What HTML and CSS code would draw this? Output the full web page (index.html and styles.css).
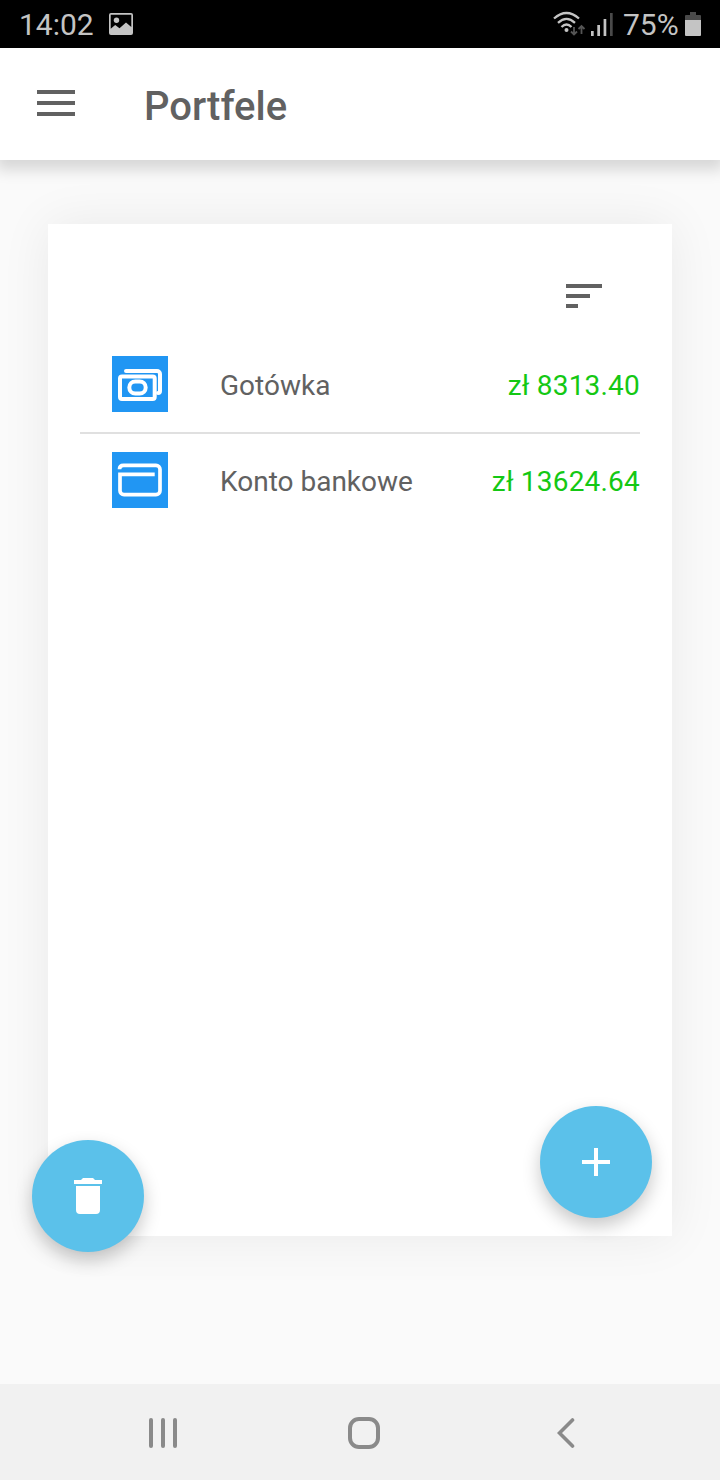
FILE: index.html
```html
<!DOCTYPE html>
<html lang="pl">
<head>
    <meta charset="utf-8">
    <title>Portfele</title>
    <link rel="stylesheet" href="styles.css">
</head>
<body>

<div class="screen">
    <!-- Status bar -->
    <div class="status-bar">
        <span class="clock">14:02</span>
        <svg class="status-image" width="24" height="22" viewBox="0 0 24 22">
            <path fill="#c4c4c4" fill-rule="evenodd" d="M2 0h20a2 2 0 0 1 2 2v18a2 2 0 0 1-2 2H2a2 2 0 0 1-2-2V2a2 2 0 0 1 2-2zM1.700 1.700v14l4.500-3.700 4.300 3.200 6.500-5.700 5.300 4.500V1.700z"/>
            <circle cx="7.500" cy="7.300" r="2.700" fill="#c4c4c4"/>
        </svg>
        <svg class="status-wifi" width="34" height="26" viewBox="0 0 34 26">
            <g fill="none" stroke="#c4c4c4" stroke-width="2.300">
                <path d="M1 7.500Q13.500-3.500 26 7.500"/>
                <path d="M5 11.800Q13.500 4 22 11.800"/>
                <path d="M8.500 16Q13.500 11 18.500 16"/>
            </g>
            <circle cx="13.500" cy="19" r="2" fill="#c4c4c4"/>
            <g fill="none" stroke="#555" stroke-width="1.800">
                <path d="M21 16v8M18 20.500l3 3 3-3M28.500 23v-8M25.500 18l3-3 3 3"/>
            </g>
        </svg>
        <svg class="status-signal" width="22" height="23" viewBox="0 0 22 23">
            <path fill="#c4c4c4" d="M0 18h2.700v5H0zM6.300 12H9v11H6.300zM12.600 6h2.700v17h-2.700z"/>
            <path fill="#4a4a4a" d="M19 0h2.700v23H19z"/>
        </svg>
        <span class="battery-text">75%</span>
        <svg class="status-battery" width="16" height="24" viewBox="0 0 16 24">
            <path fill="#4a4a4a" d="M5 0h6v3h4a1 1 0 0 1 1 1v4H0V4a1 1 0 0 1 1-1h4z"/>
            <path fill="#c4c4c4" d="M0 8h16v15a1 1 0 0 1-1 1H1a1 1 0 0 1-1-1z"/>
        </svg>
    </div>

    <!-- App bar -->
    <header class="app-bar">
        <svg class="menu-icon" width="38" height="26" viewBox="0 0 38 26">
            <path fill="#616161" d="M0 0h38v4H0zM0 11h38v4H0zM0 22h38v4H0z"/>
        </svg>
        <h1>Portfele</h1>
    </header>

    <main class="content">
        <div class="card">
            <div class="toolbar">
                <svg width="36" height="24" viewBox="0 0 36 24">
                    <path fill="#616161" d="M0 0h36v4H0zM0 10h24v4H0zM0 20h12v4H0z"/>
                </svg>
            </div>

            <div class="wallet">
                <svg class="wallet-icon" width="56" height="56" viewBox="0 0 56 56">
                    <g fill="none" stroke="#fff" stroke-width="4">
                        <rect x="8" y="20.500" width="34.700" height="22.500" rx="2"/>
                        <rect x="17.300" y="25.500" width="16.400" height="12" rx="6"/>
                        <path stroke-linecap="round" d="M14 15h31a3 3 0 0 1 3 3v17q0 2-2 2"/>
                    </g>
                </svg>
                <span class="wallet-name">Gotówka</span>
                <span class="wallet-amount">zł 8313.40</span>
            </div>

            <div class="wallet">
                <svg class="wallet-icon" width="56" height="56" viewBox="0 0 56 56">
                    <path fill="none" stroke="#fff" stroke-width="3.700" d="M7.500 17.300q0-4 4-4H44a4 4 0 0 1 4 4v21.400a4 4 0 0 1-4 4H12a4 4 0 0 1-4-4V22.300h34.700"/>
                </svg>
                <span class="wallet-name">Konto bankowe</span>
                <span class="wallet-amount">zł 13624.64</span>
            </div>
        </div>

        <!-- Floating buttons -->
        <button class="fab fab-delete">
            <svg width="28" height="36" viewBox="0 0 28 36">
                <path fill="#fff" d="M2 8h24v24a4 4 0 0 1-4 4H6a4 4 0 0 1-4-4zM0 2h7l2-2h10l2 2h7v4H0z"/>
            </svg>
        </button>
        <button class="fab fab-add">
            <svg width="28" height="28" viewBox="0 0 28 28">
                <path fill="#fff" d="M12 0h4v12h12v4H16v12h-4V16H0v-4h12z"/>
            </svg>
        </button>
    </main>

    <!-- System navigation -->
    <nav class="nav-bar">
        <svg width="28" height="30" viewBox="0 0 28 30">
            <path stroke="#8a8a8a" stroke-width="4" stroke-linecap="round" d="M2 2v26M14 2v26M26 2v26"/>
        </svg>
        <svg class="nav-home" width="32" height="32" viewBox="0 0 32 32">
            <rect x="2" y="2" width="28" height="28" rx="9" fill="none" stroke="#8a8a8a" stroke-width="4"/>
        </svg>
        <svg width="18" height="30" viewBox="0 0 18 30">
            <path fill="none" stroke="#8a8a8a" stroke-width="3.600" stroke-linecap="round" d="M15.500 2L2.500 15l13 13"/>
        </svg>
    </nav>
</div>

</body>
</html>
```
FILE: styles.css
```css
* {
    box-sizing: border-box;
}
body {
    margin: 0;
    font-family: Roboto, sans-serif;
    color: #616161;
    background-color: #fafafa;
}
svg {
    display: block;
    flex: none;
}
.screen {
    display: flex;
    flex-direction: column;
    height: 1480px;
    width: 720px;
    overflow: hidden;
}
.status-bar {
    display: flex;
    align-items: center;
    height: 48px;
    padding: 0 19px;
    background-color: #000;
    color: #c4c4c4;
    font-size: 30px;
    line-height: 46px;
}
.clock,
.battery-text {
    padding-top: 2px;
}
.clock {
    width: 90px;
}
.status-wifi {
    margin-left: auto;
}
.status-signal {
    margin: 0 10px 0 4px;
}
.battery-text {
    width: 62px;
}
.app-bar {
    display: flex;
    align-items: center;
    height: 112px;
    padding: 0 37px;
    background-color: #fff;
    box-shadow: 0 6px 14px 4px rgba(0, 0, 0, 0.14);
    clip-path: inset(0 0 -30px 0);
    z-index: 1;
}
.menu-icon {
    margin: 0 69px 2px 0;
}
h1 {
    margin: 4px 0 0;
    font-size: 40px;
    font-weight: 500;
}
.content {
    flex: 1;
    position: relative;
    padding: 64px 48px 148px;
}
.card {
    height: 100%;
    padding: 60px 32px 0;
    background-color: #fff;
    box-shadow: 0 0 48px rgba(0, 0, 0, 0.07);
}
.toolbar {
    display: flex;
    justify-content: flex-end;
    height: 48px;
    padding-right: 38px;
}
.wallet {
    display: flex;
    align-items: center;
    height: 96px;
    padding: 2px 0 0 32px;
    margin-top: 3px;
    font-size: 28px;
}
.wallet + .wallet {
    margin-top: 1px;
    padding: 0 0 2px 32px;
    border-top: 2px solid #e0e0e0;
}
.wallet-icon {
    margin-right: 52px;
    background-color: #2196f3;
}
.wallet-name,
.wallet-amount {
    padding-top: 2px;
}
.wallet-amount {
    margin-left: auto;
    letter-spacing: 0.2px;
    color: #14c814;
}
/* Buttons float over the card */
.fab {
    position: absolute;
    display: flex;
    align-items: center;
    justify-content: center;
    width: 112px;
    height: 112px;
    padding: 0;
    border: none;
    border-radius: 50%;
    background-color: #5bc1ea;
    box-shadow: 0 8px 18px rgba(0, 0, 0, 0.22);
}
.fab-delete {
    left: 32px;
    bottom: 132px;
}
.fab-add {
    right: 68px;
    bottom: 166px;
}
.nav-bar {
    display: flex;
    align-items: center;
    justify-content: space-between;
    height: 96px;
    padding: 2px 145px 0 149px;
    background-color: #f1f1f1;
}
.nav-home {
    margin-right: 6px;
}
```
